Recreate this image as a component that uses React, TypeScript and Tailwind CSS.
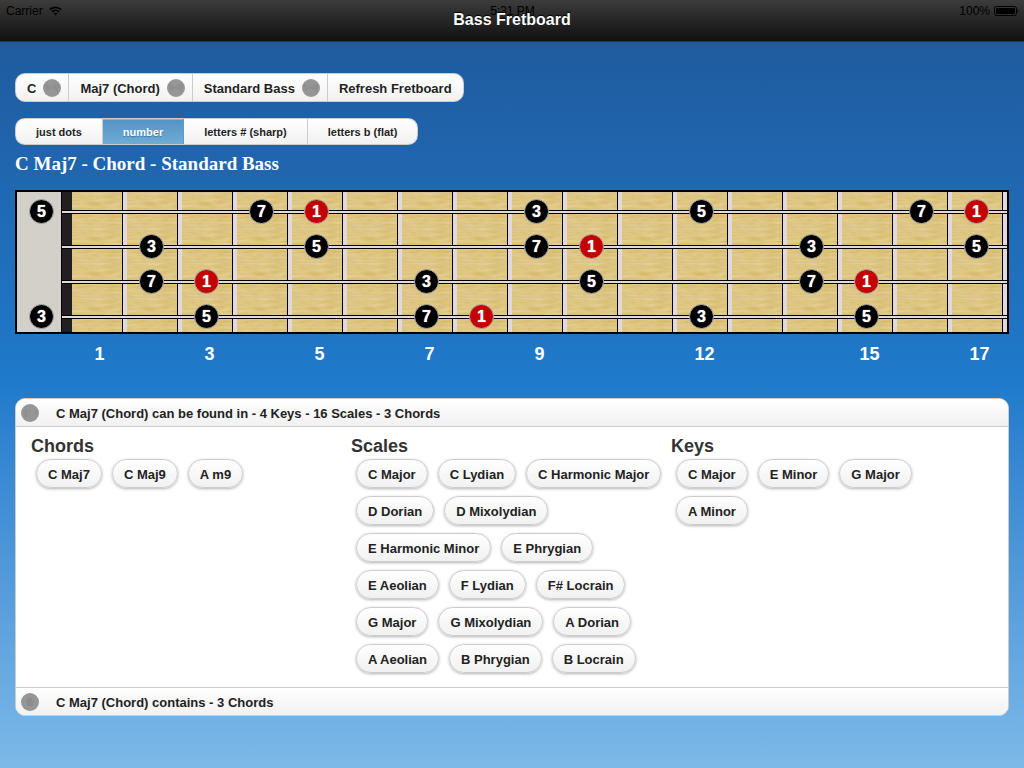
import React, { useState } from 'react';
import clsx from 'clsx';

type Note = '1' | '3' | '5' | '7';

// one row per string, keyed by fret (0 = open string)
const STRINGS: Record<number, Note>[] = [
  { 0: '5', 4: '7', 5: '1', 9: '3', 12: '5', 16: '7', 17: '1' },
  { 2: '3', 5: '5', 9: '7', 10: '1', 14: '3', 17: '5' },
  { 2: '7', 3: '1', 7: '3', 10: '5', 14: '7', 15: '1' },
  { 0: '3', 3: '5', 7: '7', 8: '1', 12: '3', 15: '5' },
];

const FRETS = Array.from({ length: 18 }, (_, i) => i);
const MARKERS = [1, 3, 5, 7, 9, 12, 15, 17];

const DISPLAY_MODES = ['just dots', 'number', 'letters # (sharp)', 'letters b (flat)'];

const RESULTS = [
  { title: 'Chords', items: ['C Maj7', 'C Maj9', 'A m9'] },
  {
    title: 'Scales',
    items: [
      'C Major', 'C Lydian', 'C Harmonic Major', 'D Dorian', 'D Mixolydian', 'E Harmonic Minor',
      'E Phrygian', 'E Aeolian', 'F Lydian', 'F# Locrain', 'G Major', 'G Mixolydian', 'A Dorian',
      'A Aeolian', 'B Phrygian', 'B Locrain',
    ],
  },
  { title: 'Keys', items: ['C Major', 'E Minor', 'G Major', 'A Minor'] },
];

const Disc = ({ kind }: { kind: 'arrow' | 'minus' | 'plus' }) => (
  <svg viewBox="0 0 18 18" className="size-[18px] shrink-0" aria-hidden="true">
    <circle cx="9" cy="9" r="9" fill="#969696" />
    {kind === 'arrow' && <path d="M1 5h4l1 2 2 1 2-1 2-2h4v4l-1 1v3h-2l-1-2-3-1-1-1-2 2-2 1H3z" fill="#8f8f8f" />}
    {kind === 'minus' && <path d="M2 7h2V5h3v8H3V9H2zM8 6h1v7H8zM14 6h2v4h-2z" fill="#8f8f8f" />}
    {kind === 'plus' && <path d="M9 4l5 5h-2v4H6V9H4z" fill="#8c8c8c" />}
  </svg>
);

const WifiIcon = () => (
  <svg viewBox="0 0 13 10" className="h-[10px] w-[13px]" fill="none" stroke="#000" strokeWidth="1.7" aria-hidden="true">
    <path d="M.8 3.6a8.2 8.2 0 0 1 11.4 0" />
    <path d="M2.9 5.8a5.2 5.2 0 0 1 7.2 0" />
    <path d="M6.5 9.4L4.5 7.4a2.9 2.9 0 0 1 4 0z" fill="#000" stroke="none" />
  </svg>
);

const BatteryIcon = () => (
  <svg viewBox="0 0 25 10" className="h-[10px] w-[25px]" aria-hidden="true">
    <rect x=".5" y=".5" width="22" height="9" rx="2" fill="none" stroke="#000" />
    <rect x="2" y="2" width="19" height="6" rx="1" fill="#000" />
    <path d="M23.5 3.2c1.2.3 1.2 3.3 0 3.6z" fill="#000" />
  </svg>
);

const WoodGrain = () => (
  <svg className="block size-full" aria-hidden="true">
    <filter id="grain" x="0" y="0" width="100%" height="100%" colorInterpolationFilters="sRGB">
      <feTurbulence type="fractalNoise" baseFrequency="0.06 0.3" numOctaves="3" seed="8" />
      <feColorMatrix values="0.09 0 0 0 0.825  0.13 0 0 0 0.71  0.26 0 0 0 0.38  0 0 0 0 1" />
    </filter>
    <rect width="100%" height="100%" filter="url(#grain)" />
    <rect width="100%" height="1" fill="#d5c29a" />
  </svg>
);

const Dot = ({ note }: { note: Note }) => (
  <span
    className={clsx(
      'absolute left-[12px] top-[7px] z-10 flex size-[25px] items-center justify-center rounded-full border border-[#aaa] text-base font-bold text-white text-shadow-[0_0_1px_#fff]',
      note === '1' ? 'bg-[#c40000]' : 'bg-black',
    )}
  >
    {note}
  </span>
);

const Fretboard = () => (
  <div className="border-2 border-black bg-black">
    {STRINGS.map((notes, row) => (
      <div key={row} className="grid grid-cols-18">
        {FRETS.map((fret) => (
          <div key={fret} className="relative flex h-[35px]">
            <div className={clsx('min-w-0 flex-1', fret === 0 ? 'bg-[#d3d0c9]' : 'bg-[#dec383]')}>
              {fret > 0 && <WoodGrain />}
            </div>
            <div className={clsx('border-l border-black', fret === 0 ? 'w-[11px] bg-[#231f20]' : 'w-[5px] bg-[#e0d8db]')} />
            {/* the string starts at the nut */}
            <div
              className={clsx(
                'absolute right-0 top-[18px] h-1 border-y border-black bg-[#e3d9d8]',
                fret === 0 ? 'w-[10px]' : 'w-full',
              )}
            />
            {notes[fret] && <Dot note={notes[fret]} />}
          </div>
        ))}
      </div>
    ))}
  </div>
);

interface PickerProps {
  label: string;
  value: string;
}

const Picker: React.FC<PickerProps> = ({ label, value }) => (
  <div className="relative flex border-r border-[#ccc]">
    <select
      aria-label={label}
      defaultValue={value}
      className="field-sizing-content h-full appearance-none pt-[2px] pl-[11px] pr-8 text-[13px] font-bold text-[#222] outline-none text-shadow-[0_1px_0_#fff]"
    >
      <option>{value}</option>
    </select>
    <span className="pointer-events-none absolute inset-y-0 right-[7px] flex items-center">
      <Disc kind="arrow" />
    </span>
  </div>
);

const App: React.FC = () => {
  const [mode, setMode] = useState('number');
  const [open, setOpen] = useState(true);

  return (
    <div className="min-h-screen bg-linear-to-b from-[#1f5799] via-[#1f7acb] to-[#7db9e8] font-['Liberation_Sans',Arial,sans-serif] text-[#333]">
      <header className="relative h-[42px] border-b border-[#333] bg-linear-to-b from-[#3c3c3c] to-[#111]">
        <div className="absolute inset-x-0 top-0 grid h-[22px] grid-cols-3 items-center pl-[6px] pr-[5px] text-xs text-black">
          <div className="flex items-center gap-[6px]">
            Carrier <WifiIcon />
          </div>
          <div className="text-center">5:31 PM</div>
          <div className="flex items-center justify-end gap-1">
            100% <BatteryIcon />
          </div>
        </div>
        <h1 className="relative pt-2 text-center text-base leading-6 font-bold text-white text-shadow-[0_-1px_1px_#000]">
          Bass Fretboard
        </h1>
      </header>

      <main className="px-[15px] pt-[31px] pb-8">
        <div className="flex h-[29px] w-fit overflow-hidden rounded-[10px] border border-[#ccc] bg-linear-to-b from-white to-[#f1f1f1]">
          <Picker label="Root note" value="C" />
          <Picker label="Chord or scale" value="Maj7 (Chord)" />
          <Picker label="Instrument" value="Standard Bass" />
          <button type="button" className="px-[11px] pt-[2px] text-[13px] font-bold text-[#222] text-shadow-[0_1px_0_#fff]">
            Refresh Fretboard
          </button>
        </div>

        <fieldset className="mt-4 flex h-[27px] w-fit overflow-hidden rounded-[10px] border border-[#ccc] bg-linear-to-b from-white to-[#f1f1f1]">
          {DISPLAY_MODES.map((m) => (
            <label
              key={m}
              className={clsx(
                'relative flex items-center border-r px-5 pt-[2px] text-[11px] font-bold last:border-r-0',
                mode === m
                  ? 'border-[#5a9bc9] bg-linear-to-b from-[#5393c5] to-[#6facd5] text-white inset-shadow-[0_1px_0_#7cb8dd] text-shadow-[0_1px_1px_#3373a5]'
                  : 'border-[#ccc] text-[#222] text-shadow-[0_1px_0_#fff]',
              )}
            >
              <input type="radio" name="display" className="sr-only" checked={mode === m} onChange={() => setMode(m)} />
              {m}
            </label>
          ))}
        </fieldset>

        <h2 className="mt-2 mb-[15px] font-['Liberation_Serif',serif] text-[19px] leading-[22px] font-bold text-white">
          C Maj7 - Chord - Standard Bass
        </h2>

        <Fretboard />

        <div className="mt-[6px] grid grid-cols-18 px-[2px] text-center text-lg leading-7 font-bold text-white">
          {FRETS.map((fret) => (
            <span key={fret}>{MARKERS.includes(fret) ? fret : ''}</span>
          ))}
        </div>

        <section className="mt-[30px] overflow-hidden rounded-[10px] border border-[#ccc] bg-white">
          <button
            type="button"
            aria-expanded={open}
            onClick={() => setOpen(!open)}
            className="flex h-7 w-full items-center gap-[17px] border-b border-[#ccc] bg-linear-to-b from-white to-[#f1f1f1] pl-[5px] text-[13px] font-bold text-[#222]"
          >
            <Disc kind="minus" />
            <span className="pt-[2px]">C Maj7 (Chord) can be found in - 4 Keys - 16 Scales - 3 Chords</span>
          </button>
          {open && (
            <div className="grid grid-cols-3 pt-2 pr-[17px] pb-[14px] pl-[15px]">
              {RESULTS.map((group) => (
                <div key={group.title}>
                  <h3 className="pb-[2px] text-lg leading-[22px] font-bold">{group.title}</h3>
                  <div className="flex flex-wrap gap-x-[10px] gap-y-2 px-[5px]">
                    {group.items.map((item) => (
                      <button
                        key={item}
                        type="button"
                        className="h-[29px] rounded-full border border-[#ccc] bg-linear-to-b from-white to-[#f1f1f1] px-[11px] pt-[2px] text-[13px] font-bold text-[#222] shadow-[0_1px_3px_rgba(0,0,0,0.3)]"
                      >
                        {item}
                      </button>
                    ))}
                  </div>
                </div>
              ))}
            </div>
          )}
          <button
            type="button"
            className="flex h-7 w-full items-center gap-[17px] border-t border-[#ccc] bg-linear-to-b from-white to-[#f1f1f1] pl-[5px] text-[13px] font-bold text-[#222]"
          >
            <Disc kind="plus" />
            <span className="pt-[2px]">C Maj7 (Chord) contains - 3 Chords</span>
          </button>
        </section>
      </main>
    </div>
  );
};

export default App;
